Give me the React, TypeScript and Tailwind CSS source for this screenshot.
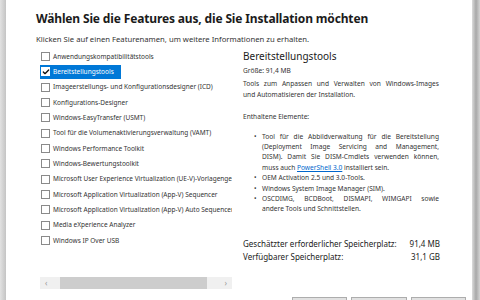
import { Check } from "lucide-react";

const features = [
  "Anwendungskompatibilitätstools",
  "Bereitstellungstools",
  "Imageerstellungs- und Konfigurationsdesigner (ICD)",
  "Konfigurations-Designer",
  "Windows-EasyTransfer (USMT)",
  "Tool für die Volumenaktivierungsverwaltung (VAMT)",
  "Windows Performance Toolkit",
  "Windows-Bewertungstoolkit",
  "Microsoft User Experience Virtualization (UE-V)-Vorlagengenerator",
  "Microsoft Application Virtualization (App-V) Sequencer",
  "Microsoft Application Virtualization (App-V) Auto Sequencer",
  "Media eXperience Analyzer",
  "Windows IP Over USB",
];

const selectedFeature = "Bereitstellungstools";

// justified lines, last line of each paragraph left aligned
const JustLine = ({ children, last }: { children: React.ReactNode; last?: boolean }) => (
  <div className={last ? "whitespace-nowrap" : "whitespace-nowrap [text-align:justify] [text-align-last:justify]"}>
    {children}
  </div>
);

const Bullet = ({ children }: { children: React.ReactNode }) => (
  <div className="flex">
    <span className="w-[8px] shrink-0">•</span>
    <div className="flex-1">{children}</div>
  </div>
);

const FeatureRow = ({ name }: { name: string }) => {
  const selected = name === selectedFeature;
  return (
    <div className="flex h-[15.33px] items-center">
      <div
        className={
          selected
            ? "flex h-[14px] items-center gap-[3px] bg-[#0078d7] pl-[1px] pr-[7px] text-white"
            : "flex h-[14px] items-center gap-[3px] pl-[1px] pr-[7px] text-[#333]"
        }
      >
        <span
          className={
            selected
              ? "flex h-[9px] w-[9px] shrink-0 items-center justify-center bg-white"
              : "h-[9px] w-[9px] shrink-0 border border-[#8a8a8a] bg-white"
          }
        >
          {selected && <Check className="h-[8px] w-[8px] text-[#111]" strokeWidth={4} />}
        </span>
        <span className="whitespace-nowrap text-[6.5px]">{name}</span>
      </div>
    </div>
  );
};

export default function App() {
  return (
    <div
      className="flex h-[300px] w-[480px] overflow-hidden bg-white text-[#1b1b1b]"
      style={{ fontFamily: '"Noto Sans", "Open Sans", sans-serif' }}
    >
      <div className="w-[6px] bg-gradient-to-r from-[#e2e2e2] to-[#c4c4c4]" />
      <div className="flex flex-1 flex-col pl-[30px] pt-[11px]">
        <h1 className="text-[12px] font-bold leading-[16px] tracking-[-0.15px]">
          Wählen Sie die Features aus, die Sie Installation möchten
        </h1>
        <p className="mt-[7px] text-[7.7px] leading-[10px] text-[#333]">
          Klicken Sie auf einen Featurenamen, um weitere Informationen zu erhalten.
        </p>
        <div className="mt-[5px] flex">
          <div className="flex w-[196px] flex-col pl-[4px]">
            <div className="flex w-[192px] flex-col overflow-hidden">
              {features.map((f) => (
                <FeatureRow key={f} name={f} />
              ))}
            </div>
            <div className="mt-[29px] flex h-[12px] w-[192px] items-center bg-[#f0f0f0] text-[8px] leading-none text-[#999]">
              <span className="w-[20px] pl-[5px]">‹</span>
              <div className="h-full w-[147px] bg-[#cdcdcd]" />
              <span className="flex-1 pr-[5px] text-right">›</span>
            </div>
          </div>
          <div className="ml-[11px] flex w-[197px] flex-col text-[6.6px] leading-[10.4px] text-[#333]">
            <div className="text-[10px] leading-[14px] text-[#1b1b1b]">Bereitstellungstools</div>
            <div className="mt-[3px]">Größe: 91,4 MB</div>
            <div className="mt-[3px] w-[196px]">
              <JustLine>Tools zum Anpassen und Verwalten von Windows-Images</JustLine>
              <JustLine last>und Automatisieren der Installation.</JustLine>
            </div>
            <div className="mt-[11.5px]">Enthaltene Elemente:</div>
            <div className="mt-[9.5px] flex w-[196px] flex-col pl-[11px]">
              <Bullet>
                <JustLine>Tool für die Abbildverwaltung für die Bereitstellung</JustLine>
                <JustLine>(Deployment Image Servicing and Management,</JustLine>
                <JustLine>DISM). Damit Sie DISM-Cmdlets verwenden können,</JustLine>
                <JustLine last>
                  muss auch <span className="text-[#0066cc] underline">PowerShell 3.0</span> installiert sein.
                </JustLine>
              </Bullet>
              <Bullet>OEM Activation 2.5 und 3.0-Tools.</Bullet>
              <Bullet>Windows System Image Manager (SIM).</Bullet>
              <Bullet>
                <JustLine>OSCDIMG, BCDBoot, DISMAPI, WIMGAPI sowie</JustLine>
                <JustLine last>andere Tools und Schnittstellen.</JustLine>
              </Bullet>
            </div>
            <div className="mt-[22px] flex w-[197px] flex-col text-[8px] leading-[13px] text-[#1b1b1b]">
              <div className="flex justify-between">
                <span>Geschätzter erforderlicher Speicherplatz:</span>
                <span>91,4 MB</span>
              </div>
              <div className="flex justify-between">
                <span>Verfügbarer Speicherplatz:</span>
                <span>31,1 GB</span>
              </div>
            </div>
          </div>
        </div>
        <div className="mt-auto flex justify-end gap-[4px] pr-[6px]">
          <div className="h-[3px] w-[55px] border border-b-0 border-[#adadad] bg-[#e1e1e1]" />
          <div className="h-[3px] w-[56px] border border-b-0 border-[#adadad] bg-[#e1e1e1]" />
          <div className="h-[3px] w-[55px] border border-b-0 border-[#adadad] bg-[#e1e1e1]" />
        </div>
      </div>
      <div className="w-[8px] bg-gradient-to-r from-[#dcdcdc] via-[#a8a8a8] to-[#d4d4d4]" />
    </div>
  );
}
